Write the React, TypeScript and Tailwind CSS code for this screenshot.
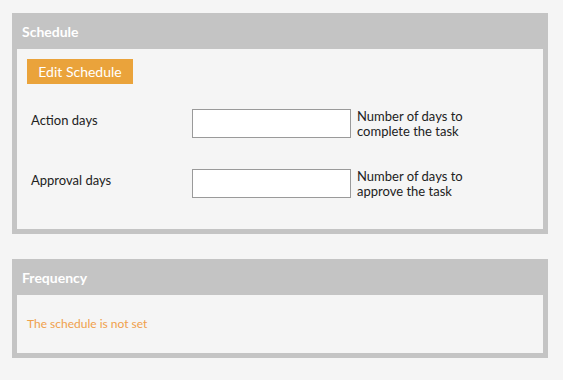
import React from "react";

const Panel: React.FC<{ title: string; children: React.ReactNode }> = (props) => {
  return (
    <div className="bg-[#c4c4c4] px-[5px] pb-[5px]">
      <div className="h-[36px] flex items-center pl-[5px] text-[14px] font-bold text-white">
        {props.title}
      </div>
      <div className="bg-[#f5f5f5]">{props.children}</div>
    </div>
  );
};

const DaysRow: React.FC<{ label: string; hint1: string; hint2: string }> = (props) => {
  return (
    <div className="flex items-start h-[29px]">
      <div className="w-[165px] pl-[4px] pt-[3px] text-[13px] leading-[16px] text-[#222]">
        {props.label}
      </div>
      <input
        type="text"
        className="w-[159px] h-[29px] bg-white border border-[#9a9a9a] outline-none"
      />
      <div className="pl-[6px] text-[13px] leading-[15px] text-[#222]">
        <p>{props.hint1}</p>
        <p>{props.hint2}</p>
      </div>
    </div>
  );
};

export default function App() {
  return (
    <div className="min-h-[380px] bg-[#f5f5f5] pt-[13px] pl-[12px] font-['Lato',sans-serif]">
      <div className="w-[536px] space-y-[25px]">
        <Panel title="Schedule">
          <div className="pt-[10px] pl-[10px] pb-[31px]">
            <button className="block h-[25px] w-[106px] bg-[#eaa33b] text-white text-[14px]">
              Edit Schedule
            </button>
            <div className="mt-[25px] space-y-[31px]">
              <DaysRow label="Action days" hint1="Number of days to" hint2="complete the task" />
              <DaysRow label="Approval days" hint1="Number of days to" hint2="approve the task" />
            </div>
          </div>
        </Panel>
        <Panel title="Frequency">
          <div className="h-[58px] flex items-center pl-[10px] text-[12px] text-[#f0a04b]">
            The schedule is not set
          </div>
        </Panel>
      </div>
    </div>
  );
}
